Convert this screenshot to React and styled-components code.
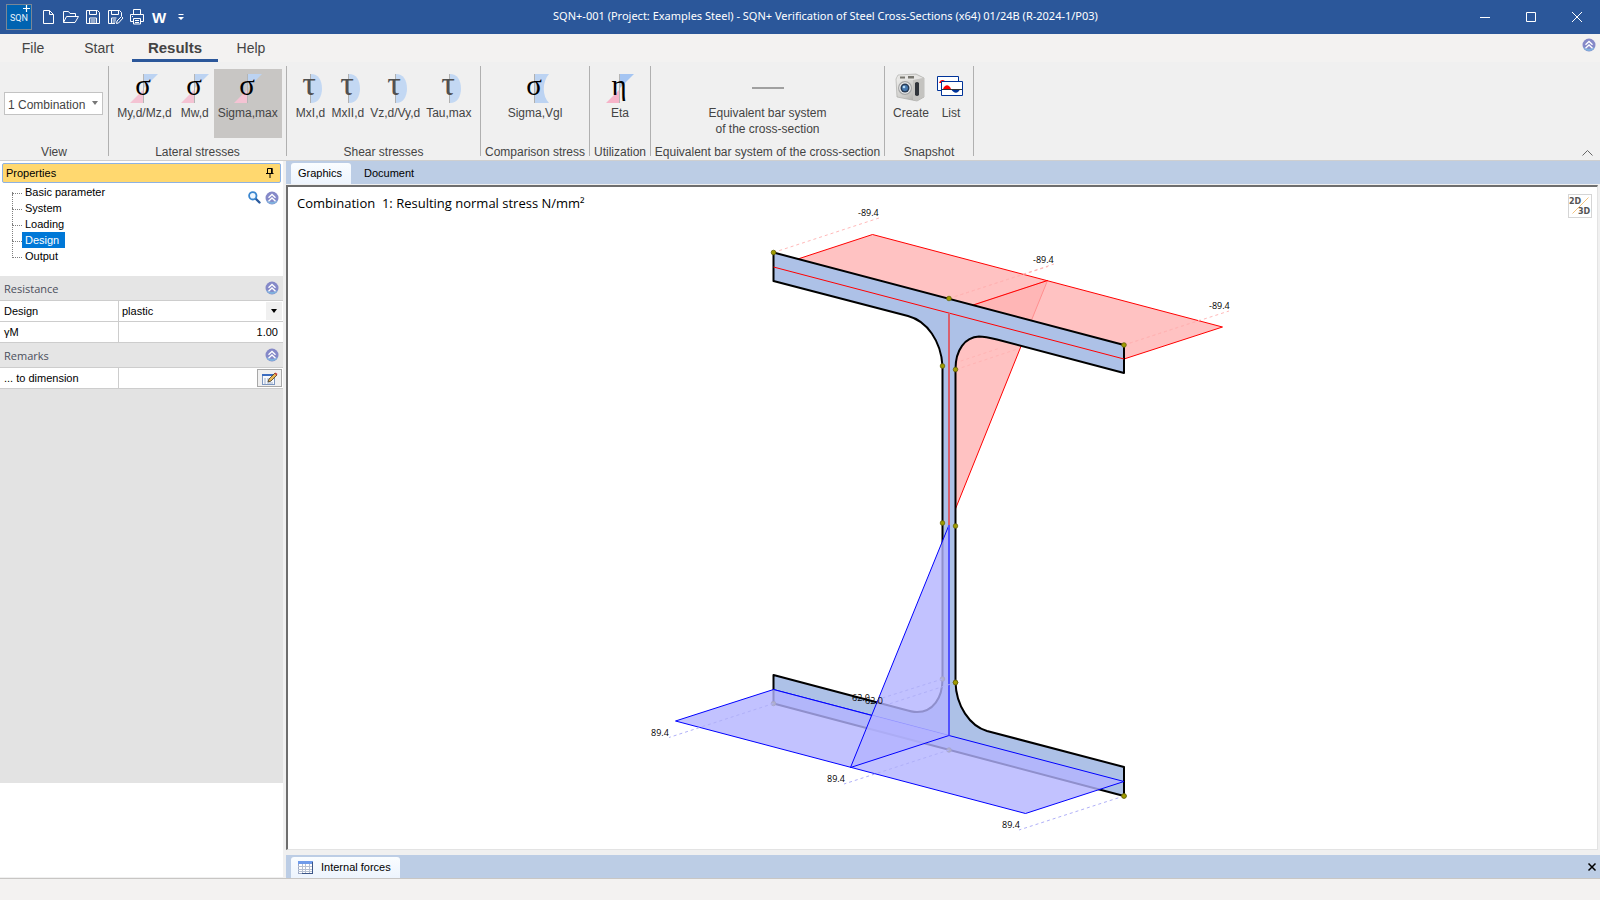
import { useState } from "react";
import styled, { createGlobalStyle } from "styled-components";

const GlobalStyle = createGlobalStyle`
  * {
    box-sizing: border-box;
  }

  body {
    margin: 0;
    background: #f0f0f0;
    color: #000;
    font-family: "Liberation Sans", Arial, sans-serif;
    font-size: 11px;
  }

  button, input, select {
    font: inherit;
    color: inherit;
    margin: 0;
    padding: 0;
    border: 0;
    border-radius: 0;
    background: none;
    outline: none;
  }

  svg {
    display: block;
    flex: none;
    overflow: visible;
  }
`

/* ---------- icons ---------- */

function LogoIcon(){
  return (
    <svg width="26" height="26" viewBox="0 0 26 26">
      <rect x="0.5" y="0.5" width="25" height="25" fill="#0063b1" stroke="#7a8796" />
      <text x="4" y="17" fontFamily="Roboto, sans-serif" fontSize="9" fill="#e8f2fb">SQN</text>
      <path d="M17 4.500h7M20.500 1v7" stroke="#fff" strokeWidth="1.200" />
    </svg>
  );
}

const quickIcons = {
  New: (
    <path d="M2.500 1.500h6l4 4v9h-10zM8.500 1.500v4h4" />
  ),
  Open: (
    <path d="M0.500 13.500v-11h5l1.500 2h5.500v3M0.500 13.500l3-6h12l-3.500 6z" />
  ),
  Save: (
    <path d="M1.500 1.500h11l2 2v11h-13zM4.500 1.500v4h7v-4M4.500 14.500v-5.500h7v5.500M5.500 11h5M5.500 13h5" />
  ),
  "Save as": (
    <path d="M8 14.500h-6.500v-13h11l2 2v3.500M4.500 1.500v4h7v-4M4.500 14.500v-5.500h5M5.500 11h3.500M5.500 13h3M9.500 14.500l.5-2.500 4.500-4.500 1.500 1.500-4.500 5z" />
  ),
  Print: (
    <path d="M4.500 5.500v-5h7v5M4.500 12.500h-3v-7h13v7h-3M4.500 9.500h7v5.500h-7zM6 11.500h4M6 13.500h4M3 7.500h1" />
  ),
};

function QuickIcon({ name }){
  return (
    <svg width="16" height="16" viewBox="0 0 16 16" fill="none" stroke="#fff">
      {quickIcons[name]}
    </svg>
  );
}

function MenuArrow(){
  return (
    <svg width="6" height="8" viewBox="0 0 6 8" fill="#fff">
      <path d="M0.500 1h5v1h-5zM0 4h6l-3 3z" />
    </svg>
  );
}

function SymbolIcon({ kind, symbol }){
  return (
    <svg width="30" height="30" viewBox="0 0 30 30">
      {kind === "cross" && (
        <>
          <path d="M15 1h14l-14 14z" fill="#bcd3f2" />
          <path d="M15 16v14h-14z" fill="#f4c3d3" />
          <path d="M14.500 1v29" stroke="#b5b5b5" />
        </>
      )}
      {kind === "eta" && (
        <>
          <path d="M15 1h14l-14 14z" fill="#a5c5f2" />
          <path d="M15 16v14h-14z" fill="#f6b3c8" />
          <path d="M14.500 1v29" stroke="#b5b5b5" />
        </>
      )}
      {kind === "arc" && (
        <>
          <path d="M16 1c7 0 11 6 11 14.500s-4 14.500-11 14.500z" fill="#c3d8f3" />
          <path d="M15.500 1v29" stroke="#b0b0b0" />
        </>
      )}
      {kind === "waist" && (
        <>
          <path d="M15 1h14c-7 8-7 22 0 29h-14z" fill="#bcd3f2" />
          <path d="M14.500 1v29" stroke="#b0b0b0" />
        </>
      )}
      <text
        x="14"
        y="22"
        textAnchor="middle"
        fontFamily="Liberation Serif, serif"
        fontSize={kind === "arc" ? 34 : 29}
        fill={kind === "arc" ? "#505050" : "#000"}
      >
        {symbol}
      </text>
    </svg>
  );
}

function BarIcon(){
  return (
    <svg width="32" height="30" viewBox="0 0 32 30">
      <rect y="14" width="32" height="2" fill="#a0a0a0" />
    </svg>
  );
}

function CameraIcon(){
  return (
    <svg width="30" height="30" viewBox="1 0 30 30">
      <defs>
        <linearGradient id="body" x1="0" y1="0" x2="1" y2="1">
          <stop offset="0" stopColor="#f4f4f2" />
          <stop offset="0.600" stopColor="#c9c8c5" />
          <stop offset="1" stopColor="#94938f" />
        </linearGradient>
      </defs>
      <path d="M1 6l2-4 18-1 8 4v19l-7 4-20-4z" fill="url(#body)" stroke="#a3a29f" strokeWidth="0.600" />
      <path d="M2 6l17 1 9-2-7-3-17 1z" fill="#e6e5e3" />
      <path d="M18 7v20l4 1 7-4v-19z" fill="#c4c3c0" />
      <path d="M5 3.500h5v2h-5zM13 3h6v2.500h-6z" fill="#77766f" />
      <path d="M20 10q2-2 4 0v12q-2 2-4 0z" fill="#30343a" />
      <circle cx="10" cy="15" r="7" fill="#a4a5a5" />
      <circle cx="10" cy="15" r="5.800" fill="#ededee" />
      <circle cx="10" cy="15" r="4.500" fill="#273b55" />
      <circle cx="10" cy="15" r="3" fill="#4779af" />
      <circle cx="9" cy="14" r="1.300" fill="#b7dbf5" />
    </svg>
  );
}

function ListIcon(){
  return (
    <svg width="28" height="30" viewBox="1 0 28 30">
      <path d="M1.500 3.500h21v14h-21z" fill="#fff" stroke="#003399" />
      <path d="M3 10c1-4 6-4 7 0z" fill="#f00" />
      <path d="M5.500 8.500h21v14h-21z" fill="#fff" stroke="#003399" />
      <path d="M7 16c2-5 6-5 8 0z" fill="#f00" />
      <path d="M15 16h9c-2 5-6 5-9 0z" fill="#003399" />
      <path d="M6 16.500h20" stroke="#333" />
    </svg>
  );
}

function CollapseIcon(){
  return (
    <svg width="14" height="14" viewBox="0 0 14 14">
      <circle cx="7" cy="7" r="6.500" fill="#8589c8" />
      <path d="M1 9a6.500 6.500 0 0 0 12 0q-6 4-12 0z" fill="#7fb0dd" />
      <path d="M3.500 6.800l3.500-3.300 3.500 3.300M3.500 10.300l3.500-3.300 3.500 3.300" fill="none" stroke="#fff" strokeWidth="1.300" />
    </svg>
  );
}

function SearchIcon(){
  return (
    <svg width="13" height="13" viewBox="0 0 13 13" fill="none">
      <path d="M7.500 7.500l4 4" stroke="#2a5b9e" strokeWidth="2.400" strokeLinecap="round" />
      <circle cx="4.800" cy="4.800" r="3.700" fill="#eef7ff" stroke="#3a86cf" strokeWidth="1.800" />
    </svg>
  );
}

function PinIcon(){
  return (
    <svg width="8" height="10" viewBox="0 0 8 10">
      <path d="M1.500 0.500h4.500v5h-4.500zM0 5.500h7.500M4 6v4" fill="none" stroke="#000" />
      <path d="M5 0h1.500v5h-1.500z" />
    </svg>
  );
}

function NoteIcon(){
  return (
    <svg width="16" height="13" viewBox="0 0 16 13">
      <rect x="0.500" y="2.500" width="12" height="10" fill="#f7f9fd" stroke="#7d97c0" />
      <path d="M0 2h13v2h-13z" fill="#3a6cc0" />
      <path d="M2 7h2M2 9h2M2 11h2M5 7h5M5 9h4M5 11h6" stroke="#9fb0c9" />
      <path d="M6 10l1-3 6-6 2 2-6 6z" fill="#e7b755" stroke="#4a3b20" strokeWidth="0.800" />
      <path d="M12.500 1.500l1-1 2 1.500-1 1.500z" fill="#c8403a" />
    </svg>
  );
}

function TableIcon(){
  return (
    <svg width="15" height="13" viewBox="0 0 15 13">
      <rect x="0.500" y="0.500" width="14" height="12" fill="#fff" stroke="#9aa7c4" />
      <rect width="15" height="3" fill="#6f9bea" />
      <path d="M0 5.500h15M0 8.500h15M0 10.500h15M4.500 3v10M7.500 3v10M11.500 3v10" stroke="#b6c0d2" />
      <path d="M14.500 1v12M4 12.500h11" stroke="#3c5688" />
    </svg>
  );
}

function ViewModeIcon(){
  return (
    <svg width="24" height="24" viewBox="0 0 24 24">
      <rect x="0.500" y="0.500" width="23" height="23" fill="#fff" stroke="#d5d5d5" />
      <path d="M4.500 19.500l16-16" stroke="#f2c27c" />
      <text x="1" y="10" fontFamily="DejaVu Sans, sans-serif" fontWeight="700" fontSize="8" fill="#555">2D</text>
      <text x="10" y="20" fontFamily="DejaVu Sans, sans-serif" fontWeight="700" fontSize="8" fill="#555">3D</text>
    </svg>
  );
}

/* ---------- title bar ---------- */

function TitleBar(){
  return (
    <TitleRow>
      <QuickAccess>
        <LogoIcon />
        {Object.keys(quickIcons).map((name) => (
          <QuickButton key={name} aria-label={name}><QuickIcon name={name} /></QuickButton>
        ))}
        <QuickButton className="word">W</QuickButton>
        <QuickButton aria-label="Customize"><MenuArrow /></QuickButton>
      </QuickAccess>
      <WindowTitle>
        SQN+-001 (Project: Examples Steel) - SQN+ Verification of Steel Cross-Sections (x64) 01/24B (R-2024-1/P03)
      </WindowTitle>
      <WindowButtons>
        <WindowButton aria-label="Minimize">
          <svg width="10" height="10" stroke="#fff"><path d="M0 5.500h10" /></svg>
        </WindowButton>
        <WindowButton aria-label="Maximize">
          <svg width="10" height="10" stroke="#fff" fill="none"><path d="M0.500 0.500h9v9h-9z" /></svg>
        </WindowButton>
        <WindowButton aria-label="Close">
          <svg width="10" height="10" stroke="#fff"><path d="M0 0l10 10M10 0l-10 10" /></svg>
        </WindowButton>
      </WindowButtons>
    </TitleRow>
  );
}

const TitleRow = styled.header`
  display: flex;
  align-items: center;
  height: 34px;
  background: #2b579a;
  color: #fff;
`

const QuickAccess = styled.div`
  display: flex;
  align-items: center;
  gap: 6px;
  padding-left: 6px;
  > svg {
    margin-right: 3px;
  }
  .word {
    font-size: 15px;
    font-weight: 700;
  }
`

const QuickButton = styled.button`
  display: grid;
  place-items: center;
  width: 16px;
  height: 20px;
  color: #fff;
`

const WindowTitle = styled.div`
  flex: 1;
  padding-bottom: 3px;
  font-family: "Noto Sans", "Open Sans", sans-serif;
  font-size: 11px;
  text-align: center;
  white-space: nowrap;
`

const WindowButtons = styled.div`
  display: flex;
  justify-content: flex-end;
`

const WindowButton = styled.button`
  display: grid;
  place-items: center;
  width: 46px;
  height: 34px;
`

/* ---------- ribbon ---------- */

function RibbonTabs(){
  const [active, setActive] = useState("Results");

  return (
    <TabRow>
      {["File", "Start", "Results", "Help"].map((name) => (
        <RibbonTab key={name} $active={name === active} onClick={() => setActive(name)}>
          {name}
        </RibbonTab>
      ))}
      <TabRowEnd>
        <button aria-label="Collapse all"><CollapseIcon /></button>
      </TabRowEnd>
    </TabRow>
  );
}

const TabRow = styled.nav`
  display: flex;
  height: 28px;
  background: #f3f2f1;
`

const RibbonTab = styled.button`
  width: ${(p) => (p.$active ? "86px" : "66px")};
  padding-top: ${(p) => (p.$active ? "2px" : "0")};
  padding-bottom: ${(p) => (p.$active ? "0" : "1px")};
  font-size: ${(p) => (p.$active ? "15px" : "14px")};
  font-weight: ${(p) => (p.$active ? "700" : "400")};
  color: #444;
  border-bottom: ${(p) => (p.$active ? "3px solid #2b579a" : "0")};
`

const TabRowEnd = styled.div`
  margin-left: auto;
  padding: 4px 4px 0 0;
`

const groups = [
  {
    title: "Lateral stresses",
    width: 178,
    items: [
      { label: "My,d/Mz,d", kind: "cross", symbol: "σ" },
      { label: "Mw,d", kind: "cross", symbol: "σ" },
      { label: "Sigma,max", kind: "cross", symbol: "σ" },
    ],
  },
  {
    title: "Shear stresses",
    width: 194,
    tight: true,
    items: [
      { label: "MxI,d", kind: "arc", symbol: "τ" },
      { label: "MxII,d", kind: "arc", symbol: "τ" },
      { label: "Vz,d/Vy,d", kind: "arc", symbol: "τ" },
      { label: "Tau,max", kind: "arc", symbol: "τ" },
    ],
  },
  {
    title: "Comparison stress",
    width: 109,
    items: [{ label: "Sigma,Vgl", kind: "waist", symbol: "σ" }],
  },
  {
    title: "Utilization",
    width: 61,
    items: [{ label: "Eta", kind: "eta", symbol: "η" }],
  },
  {
    title: "Equivalent bar system of the cross-section",
    width: 234,
    items: [{ label: "Equivalent bar system\nof the cross-section", icon: <BarIcon /> }],
  },
  {
    title: "Snapshot",
    width: 89,
    items: [
      { label: "Create", icon: <CameraIcon /> },
      { label: "List", icon: <ListIcon /> },
    ],
  },
];

function Ribbon(){
  const [pressed, setPressed] = useState("Sigma,max");

  return (
    <RibbonRow>
      <RibbonGroup $width={109}>
        <ViewField>
          <ComboBox>
            <select aria-label="View">
              <option>1 Combination</option>
            </select>
            <svg width="6" height="4" viewBox="0 0 6 4"><path d="M0 0h6l-3 4z" fill="#777" /></svg>
          </ComboBox>
        </ViewField>
        <GroupTitle>View</GroupTitle>
      </RibbonGroup>
      {groups.map((group) => (
        <RibbonGroup key={group.title} $width={group.width}>
          <GroupItems>
            {group.items.map((item) => (
              <RibbonButton
                key={item.label}
                $tight={group.tight}
                $pressed={item.label === pressed}
                onClick={() => setPressed(item.label)}
              >
                {item.icon || <SymbolIcon kind={item.kind} symbol={item.symbol} />}
                <span>{item.label}</span>
              </RibbonButton>
            ))}
          </GroupItems>
          <GroupTitle>{group.title}</GroupTitle>
        </RibbonGroup>
      ))}
      <RibbonEnd>
        <button aria-label="Collapse ribbon">
          <svg width="11" height="6" fill="none" stroke="#666"><path d="M0.500 5.500l5-5 5 5" /></svg>
        </button>
      </RibbonEnd>
    </RibbonRow>
  );
}

const RibbonRow = styled.div`
  display: flex;
  height: 99px;
  padding: 4px 0;
  border-bottom: 1px solid #cfcfcf;
  color: #444;
  font-size: 12px;
`

const RibbonGroup = styled.section`
  display: flex;
  flex-direction: column;
  justify-content: space-between;
  flex: none;
  width: ${(p) => p.$width}px;
  border-right: 1px solid #b0b0b0;
`

const ViewField = styled.div`
  padding: 26px 5px 0 4px;
`

const ComboBox = styled.div`
  display: flex;
  align-items: center;
  height: 23px;
  padding-right: 4px;
  background: #fff;
  border: 1px solid #c3c3c3;
  select {
    appearance: none;
    flex: 1;
    min-width: 0;
    padding: 2px 0 0 3px;
  }
  svg {
    margin-bottom: 1px;
  }
`

const GroupItems = styled.div`
  display: flex;
  justify-content: center;
  padding-top: 3px;
`

const RibbonButton = styled.button`
  display: flex;
  flex-direction: column;
  align-items: center;
  gap: 2px;
  height: 69px;
  padding: ${(p) => (p.$tight ? "4px 3px 0" : "4px 4px 0")};
  line-height: 16px;
  white-space: pre;
  background: ${(p) => (p.$pressed ? "#c8c6c4" : "transparent")};
`

const GroupTitle = styled.div`
  text-align: center;
  line-height: 8px;
  white-space: nowrap;
`

const RibbonEnd = styled.div`
  display: flex;
  align-items: flex-end;
  margin-left: auto;
  padding-right: 7px;
`

/* ---------- properties panel ---------- */

const treeItems = ["Basic parameter", "System", "Loading", "Design", "Output"];

function PropertiesPanel(){
  const [selected, setSelected] = useState("Design");

  return (
    <Panel>
      <PanelTitle>
        Properties
        <button aria-label="Pin"><PinIcon /></button>
      </PanelTitle>
      <TreeArea>
        <Tree>
          {treeItems.map((name) => (
            <li key={name}>
              <TreeItem $selected={name === selected} onClick={() => setSelected(name)}>
                {name}
              </TreeItem>
            </li>
          ))}
        </Tree>
        <TreeTools>
          <button aria-label="Search"><SearchIcon /></button>
          <button aria-label="Collapse"><CollapseIcon /></button>
        </TreeTools>
      </TreeArea>
      <Properties>
        <SectionTitle>
          Resistance
          <button aria-label="Collapse Resistance"><CollapseIcon /></button>
        </SectionTitle>
        <PropertyRow>
          <label htmlFor="design">Design</label>
          <PropertyValue>
            <select id="design">
              <option>plastic</option>
            </select>
            <DropArrow>
              <svg width="6" height="4" viewBox="0 0 6 4"><path d="M0 0h6l-3 4z" /></svg>
            </DropArrow>
          </PropertyValue>
        </PropertyRow>
        <PropertyRow>
          <label htmlFor="gamma">γM</label>
          <PropertyValue>
            <input id="gamma" className="number" defaultValue="1.00" />
          </PropertyValue>
        </PropertyRow>
        <SectionTitle>
          Remarks
          <button aria-label="Collapse Remarks"><CollapseIcon /></button>
        </SectionTitle>
        <PropertyRow>
          <label htmlFor="remark">... to dimension</label>
          <PropertyValue>
            <input id="remark" />
            <EditButton aria-label="Edit remark"><NoteIcon /></EditButton>
          </PropertyValue>
        </PropertyRow>
      </Properties>
      <PanelFoot />
    </Panel>
  );
}

const Panel = styled.aside`
  display: flex;
  flex-direction: column;
  flex: none;
  width: 283px;
  padding-top: 2px;
  background: #fff;
`

const PanelTitle = styled.div`
  display: flex;
  justify-content: space-between;
  align-items: center;
  height: 20px;
  margin: 0 2px;
  padding: 0 6px 0 3px;
  background: #ffd86f;
  border: 1px solid #8db2e3;
  border-radius: 2px;
`

const TreeArea = styled.div`
  display: flex;
  justify-content: space-between;
  height: 93px;
  padding-top: 1px;
`

const Tree = styled.ul`
  margin: 0 0 0 12px;
  padding: 0;
  list-style: none;
  li {
    display: flex;
    height: 16px;
  }
  li::before {
    content: "";
    width: 9px;
    height: 17px;
    margin-top: -8px;
    border-left: 1px dotted #808080;
    border-bottom: 1px dotted #808080;
  }
  li:first-child::before {
    height: 1px;
    margin-top: 8px;
  }
`

const TreeItem = styled.button`
  padding: 0 6px 0 3px;
  line-height: 16px;
  color: ${(p) => (p.$selected ? "#fff" : "#000")};
  background: ${(p) => (p.$selected ? "#0078d7" : "transparent")};
`

const TreeTools = styled.div`
  display: flex;
  align-items: flex-start;
  gap: 4px;
  padding: 7px 4px 0 0;
`

const Properties = styled.div`
  flex: 1;
  background: #e3e3e3;
`

const SectionTitle = styled.div`
  display: flex;
  justify-content: space-between;
  align-items: center;
  height: 25px;
  padding: 0 4px;
  border-bottom: 1px solid #cdcdcd;
  background: #e5e5e5;
  color: #4b4f5c;
  font-family: "Open Sans", "Noto Sans", sans-serif;
  font-size: 11px;
`

const PropertyRow = styled.div`
  display: grid;
  grid-template-columns: 118px 1fr;
  height: 21px;
  border-bottom: 1px solid #cdcdcd;
  background: #fff;
  label {
    padding-left: 4px;
    line-height: 20px;
  }
`

const PropertyValue = styled.div`
  display: flex;
  min-width: 0;
  padding: 1px;
  border-left: 1px solid #cdcdcd;
  select, input {
    appearance: none;
    flex: 1;
    min-width: 0;
    padding: 0 4px 0 2px;
  }
  .number {
    text-align: right;
  }
`

const DropArrow = styled.span`
  display: grid;
  place-items: center;
  width: 16px;
  background: #f0f0f0;
  pointer-events: none;
`

const EditButton = styled.button`
  display: grid;
  place-items: center;
  width: 25px;
  height: 18px;
  background: #f0f0f0;
  border: 1px solid #a8a8a8;
`

const PanelFoot = styled.div`
  height: 95px;
  border-bottom: 1px solid #f0f0f0;
`

/* ---------- stress drawing ---------- */

const section = `
  M773.500 252.500 L1124 345 V373 L997 339.500 Q985 336.500 979 336.500
  C965 337 955.500 350 955.500 369 V682
  C956 706 970 726 987 731 L1124 767 V796 L773.500 703.500 V675
  L904 709.500 Q912 712 917 712 C933 712 942.500 698 942.500 679 V366
  C941 341 927 321 908 316 L773.500 281 Z
`;

const nodes = [
  [773.5, 252.5], [949, 298.5], [1124, 345],
  [942.5, 366], [955.5, 369.5], [942.5, 523], [955.5, 526],
  [773.5, 703.5], [949, 750], [1124, 796], [942.5, 679], [955.5, 682.5],
];

// nodes that lie in front of the tension surfaces
const frontNodes = [nodes[9], nodes[11]];

const redLeaders = [
  [773.5, 252.5, 879, 218], [949, 298.5, 1054, 264], [1124, 345, 1229, 311],
];

const blueLeaders = [
  [773.5, 703.5, 669, 737.5], [949, 750, 844, 784], [1124, 796, 1019, 830],
  [942.5, 679, 876, 700], [955.5, 682.5, 889, 704],
];

const values = [
  [858, 216, "-89.4"], [1033, 263, "-89.4"], [1209, 309, "-89.4"],
  [852, 701, "62.0"], [865, 704, "62.0"],
  [651, 736, "89.4"], [827, 782, "89.4"], [1002, 828, "89.4"],
];

function Leaders({ lines, color }){
  return lines.map(([x1, y1, x2, y2]) => (
    <line key={`${x1} ${y1}`} x1={x1} y1={y1} x2={x2} y2={y2} stroke={color} strokeDasharray="3 3" />
  ));
}

function Nodes({ points }){
  return points.map(([x, y]) => (
    <circle key={`${x} ${y}`} cx={x} cy={y} r="2.300" fill="#a09c00" stroke="#66640a" strokeWidth="0.800" />
  ));
}

function StressDrawing(){
  return (
    <svg viewBox="288 187 1309 662" role="img" aria-label="Resulting normal stress">
      <Leaders lines={redLeaders} color="#ffb9b9" />
      <path d="M949 313L1047.500 280.500L949 525z" fill="#ffb3b3" fillOpacity="0.800" stroke="#f00" />
      <path d="M773.500 267L872.500 234.500L1222.500 327L1124 359z" fill="#ffb3b3" fillOpacity="0.800" stroke="#f00" />
      <path d="M949 313L1047.500 280.500" stroke="#f00" />
      <path d="M955 363l45-15M956 369.500l60-20M949 298.500l99-32M1124 345l76-25" stroke="#ffb4b4" strokeDasharray="3 3" />

      <path d={section} fill="#adc1e7" stroke="#000" strokeWidth="2" strokeLinejoin="round" />
      <path d="M773.500 267L1124 359" stroke="#f00" />
      <path d="M949 313V525" stroke="#d9606e" strokeWidth="2" />
      <Nodes points={nodes} />
      <path d="M773.500 689.500L949 735.500" stroke="#00f" />

      <path d="M773.500 689.500L675.500 721L1025.500 813.500L1124 781.500z" fill="#b3b3ff" fillOpacity="0.800" />
      <path d="M949 525L850.500 767.500L949 735.500z" fill="#b3b3ff" fillOpacity="0.800" />
      <path d="M872 715.500L773.500 689.500L675.500 721L1025.500 813.500L1124 781.500L949 735.500" fill="none" stroke="#00f" />
      <path d="M949 525L850.500 767.500L949 735.500" fill="none" stroke="#00f" />
      <path d="M949 525V735.500" stroke="#5252ff" strokeWidth="2" />
      <Leaders lines={blueLeaders} color="#b0b0f8" />
      <Nodes points={frontNodes} />
      <g fontFamily="Open Sans, Noto Sans, sans-serif" fontSize="9">
        {values.map(([x, y, text]) => (
          <text key={x} x={x} y={y}>{text}</text>
        ))}
      </g>
    </svg>
  );
}

/* ---------- main area ---------- */

function Workspace(){
  const [tab, setTab] = useState("Graphics");

  return (
    <WorkArea>
      <TabStrip>
        {["Graphics", "Document"].map((name) => (
          <DocTab key={name} $active={name === tab} onClick={() => setTab(name)}>
            {name}
          </DocTab>
        ))}
      </TabStrip>
      <Canvas>
        <CanvasTitle>{"Combination  1: Resulting normal stress N/mm²"}</CanvasTitle>
        <ViewMode aria-label="Switch 2D / 3D"><ViewModeIcon /></ViewMode>
        <StressDrawing />
      </Canvas>
      <TabStrip>
        <DocTab $active>
          <TableIcon />
          Internal forces
        </DocTab>
        <CloseButton aria-label="Close Internal forces">
          <svg width="8" height="8" stroke="#000" strokeWidth="1.500"><path d="M0.500 0.500l7 7M7.500 0.500l-7 7" /></svg>
        </CloseButton>
      </TabStrip>
    </WorkArea>
  );
}

const WorkArea = styled.main`
  display: flex;
  flex-direction: column;
  flex: 1;
  min-width: 0;
`

const TabStrip = styled.div`
  display: flex;
  align-items: flex-end;
  height: 23px;
  padding: 0 4px 0 5px;
  background: #bccde5;
`

const DocTab = styled.button`
  display: flex;
  align-items: center;
  gap: 8px;
  height: 21px;
  padding: 0 9px 1px 7px;
  margin-right: 6px;
  border-radius: 3px 3px 0 0;
  background: ${(p) => (p.$active ? "linear-gradient(#fafdff, #edf4fd)" : "transparent")};
`

const CloseButton = styled.button`
  align-self: center;
  margin-left: auto;
`

const Canvas = styled.div`
  position: relative;
  flex: 1;
  min-height: 0;
  margin: 1px 2px 5px 0;
  background: #fff;
  border: 1px solid #e3e3e3;
  border-top: 2px solid #6e6e6e;
  border-left: 2px solid #6e6e6e;
  > svg {
    width: 100%;
    height: 100%;
  }
`

const CanvasTitle = styled.div`
  position: absolute;
  top: 7px;
  left: 9px;
  font-family: "Open Sans", "Noto Sans", sans-serif;
  font-size: 13px;
  white-space: pre;
`

const ViewMode = styled.button`
  position: absolute;
  top: 7px;
  right: 5px;
`

/* ---------- page ---------- */

function App(){
  return (
    <Window>
      <GlobalStyle />
      <TitleBar />
      <RibbonTabs />
      <Ribbon />
      <Content>
        <PropertiesPanel />
        <Workspace />
      </Content>
      <StatusBar />
    </Window>
  );
}

const Window = styled.div`
  display: flex;
  flex-direction: column;
  height: 100vh;
`

const Content = styled.div`
  display: flex;
  gap: 3px;
  flex: 1;
  min-height: 0;
`

const StatusBar = styled.footer`
  height: 22px;
  background: #f3f2f1;
  border-top: 1px solid #c8c6c4;
`

export default App;
